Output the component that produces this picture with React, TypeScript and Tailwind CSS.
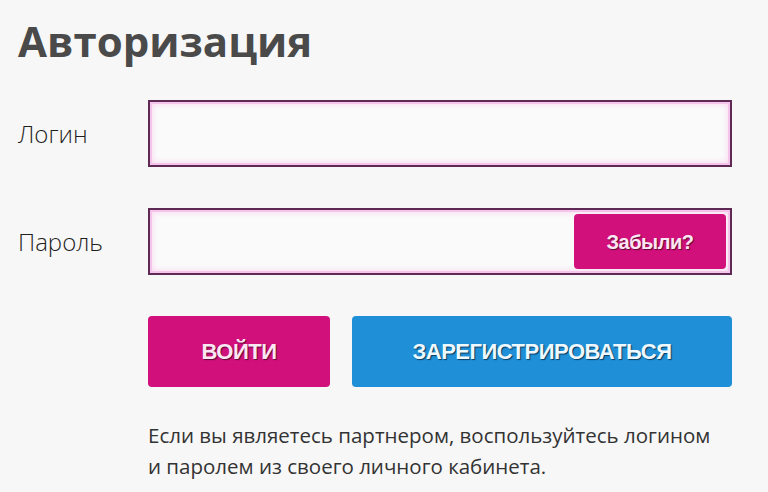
import React from "react";

const inputCls =
  "w-[584px] h-[67px] border-2 border-[#5e2a55] bg-[#fafafa] shadow-[inset_0_0_0_2px_#f6c4ea,inset_0_0_6px_2px_#f9d3ef]";

export default function App() {
  return (
    <div className="w-[768px] h-[492px] bg-[#f7f7f7] overflow-hidden pl-[18px] pt-[16px] font-['Open_Sans',sans-serif] text-[#333]">
      <h1 className="text-[42px] leading-[50px] font-bold text-[#4a4a4a]">Авторизация</h1>
      <div className="mt-[34px] flex items-center">
        <div className="w-[130px] text-[24px] font-light text-[#1f1f1f]">Логин</div>
        <div className={inputCls}></div>
      </div>
      <div className="mt-[41px] flex items-center">
        <div className="w-[130px] text-[24px] font-light text-[#1f1f1f]">Пароль</div>
        <div className={inputCls + " flex items-center justify-end pr-[4px]"}>
          <button className="w-[152px] h-[55px] rounded-[4px] bg-[#d1107b] text-[#fbe6f3] font-bold text-[20px] tracking-[-0.5px] font-['Liberation_Sans',sans-serif] [text-shadow:1px_1px_1px_#5a0a35]">
            Забыли?
          </button>
        </div>
      </div>
      <div className="mt-[41px] ml-[130px] flex gap-[22px]">
        <button className="w-[182px] h-[71px] rounded-[4px] bg-[#d1107b] text-[#fbe6f3] font-bold text-[22px] tracking-[-0.5px] font-['Liberation_Sans',sans-serif] [text-shadow:1px_1px_1px_#5a0a35]">
          ВОЙТИ
        </button>
        <button className="w-[380px] h-[71px] rounded-[4px] bg-[#1f90d8] text-[#eef8ff] font-bold text-[22px] tracking-[-0.5px] font-['Liberation_Sans',sans-serif] [text-shadow:1px_1px_1px_#0b3b5e]">
          ЗАРЕГИСТРИРОВАТЬСЯ
        </button>
      </div>
      <p className="mt-[33px] ml-[130px] text-[20.5px] leading-[31px] text-[#333]">
        Если вы являетесь партнером, воспользуйтесь логином
        <br />
        и паролем из своего личного кабинета.
      </p>
    </div>
  );
}
